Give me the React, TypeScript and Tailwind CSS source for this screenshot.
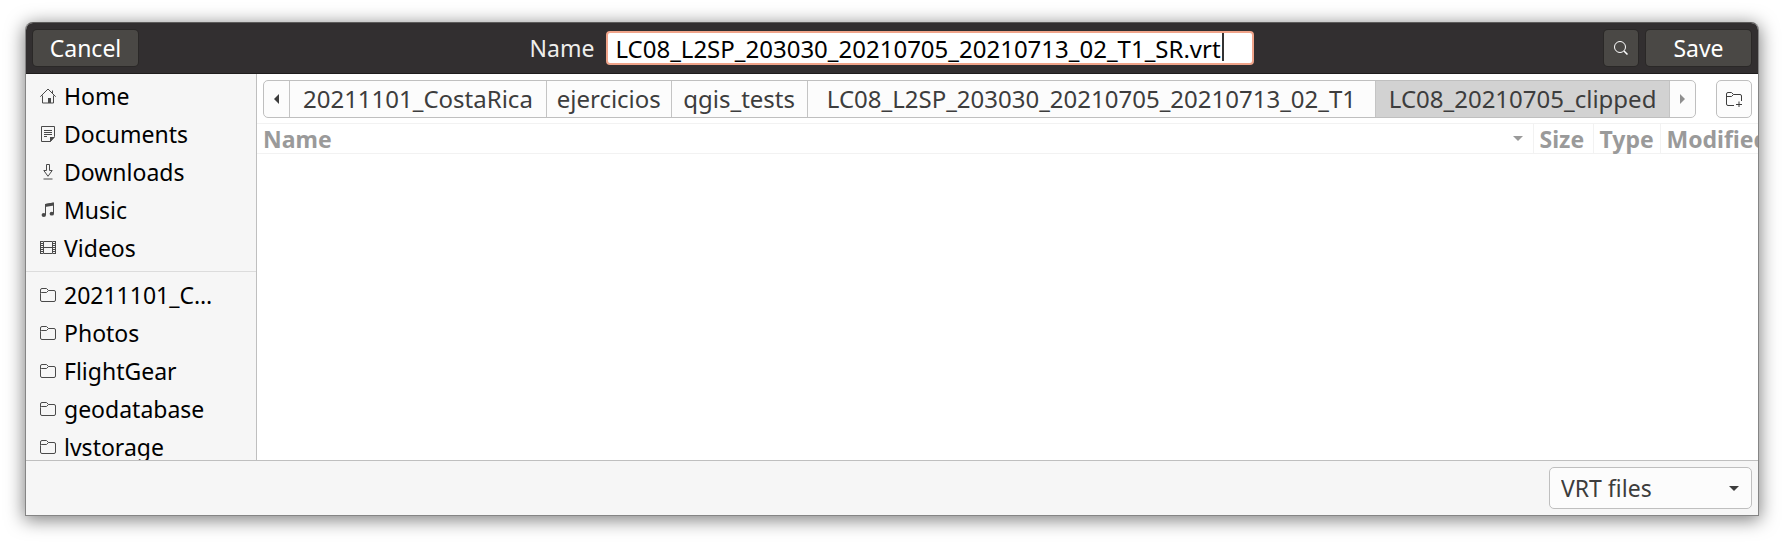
import React from "react";

type IconProps = { className?: string };

const svgProps = {
  width: 16,
  height: 16,
  viewBox: "0 0 16 16",
  fill: "none",
  stroke: "currentColor",
  strokeWidth: 1,
  "aria-hidden": true,
} as const;

const HomeIcon = () => (
  <svg {...svgProps}>
    <path d="M0.3 8.7 8 1l7.7 7.7M2.5 7.5v7.500h11V7.500" />
    <path d="M12.500 2.500v3" />
    <path d="M8 10h3v5H8z" fill="currentColor" stroke="none" />
  </svg>
);
const DocumentIcon = () => (
  <svg {...svgProps}>
    <path d="M1.500.5h13v10l-4 5h-9z" />
    <path d="M4 4.500h8M4 6.500h8M4 8.500h8M4 10.500h3" />
    <path d="M10 16v-5h5z" fill="currentColor" stroke="none" />
  </svg>
);
const DownloadIcon = () => (
  <svg {...svgProps}>
    <path d="M6.500.5h3v6h2.700L8 12.300 3.800 6.500h2.700zM3.500 15h9" />
  </svg>
);
const MusicIcon = () => (
  <svg {...svgProps}>
    <path d="M5.500 13V2.500l8-1.500v10.500" />
    <path d="M5 2l9-1.500v3L5 5z" fill="currentColor" stroke="none" />
    <ellipse cx="3.800" cy="13" rx="2.200" ry="1.900" fill="currentColor" stroke="none" />
    <ellipse cx="11.800" cy="11.700" rx="2.200" ry="1.900" fill="currentColor" stroke="none" />
  </svg>
);
const VideoIcon = () => (
  <svg {...svgProps}>
    <path d="M3.500 1.500h9v12h-9zM3.500 7.500h9" />
    <path d="M2 1v13M14 1v13" strokeWidth="2" strokeDasharray="1 1" />
    <path d="M.5 1v13M15.500 1v13" />
  </svg>
);
const FolderIcon = () => (
  <svg {...svgProps}>
    <path d="M.5 6.500V3A1.500 1.500 0 0 1 2 1.500h4.500L8.500 3.500H14A1.500 1.500 0 0 1 15.500 5v8a1.500 1.500 0 0 1-1.500 1.500H2A1.500 1.500 0 0 1 .5 13zM.5 6A1 1 0 0 1 1.500 5.500h5l2-2" />
  </svg>
);
const NewFolderIcon = () => (
  <svg {...svgProps} width={18} height={16} viewBox="0 0 18 16">
    <path d="M9 14.500H3A1.500 1.500 0 0 1 1.500 13V3A1.500 1.500 0 0 1 3 1.500h3.500L8.500 3.500H15A1.500 1.500 0 0 1 16.500 5v5M1.500 5.500h5l2-2M11 13.500h6M14 10.500v6" />
  </svg>
);
const SearchIcon = () => (
  <svg {...svgProps}>
    <circle cx="7" cy="7" r="5.500" />
    <path d="M11 11l3.500 3.500" strokeWidth="1.500" />
  </svg>
);

function Triangle({ dir, className = "" }: IconProps & { dir: "left" | "right" | "down" }) {
  const d = { left: "M5 0v10L0 5z", right: "M0 0v10l5-5z", down: "M0 0h10L5 5z" }[dir];
  return (
    <svg
      width={dir === "down" ? 10 : 5}
      height={dir === "down" ? 5 : 10}
      className={className}
      fill="currentColor"
      aria-hidden
    >
      <path d={d} />
    </svg>
  );
}

const places = [
  { name: "Home", Icon: HomeIcon },
  { name: "Documents", Icon: DocumentIcon },
  { name: "Downloads", Icon: DownloadIcon },
  { name: "Music", Icon: MusicIcon },
  { name: "Videos", Icon: VideoIcon },
];
const bookmarks = [
  { name: "20211101_C…", Icon: FolderIcon },
  { name: "Photos", Icon: FolderIcon },
  { name: "FlightGear", Icon: FolderIcon },
  { name: "geodatabase", Icon: FolderIcon },
  { name: "lvstorage", Icon: FolderIcon },
];
const crumbs = [
  "20211101_CostaRica",
  "ejercicios",
  "qgis_tests",
  "LC08_L2SP_203030_20210705_20210713_02_T1",
  "LC08_20210705_clipped",
];

function PlaceList({ items }: { items: typeof places }) {
  return (
    <ul>
      {items.map(({ name, Icon }) => (
        <li key={name}>
          <a href="#" className="flex h-[38px] items-center gap-2 pl-3.5 text-black">
            <span className="text-[#4a4a4a]">
              <Icon />
            </span>
            {name}
          </a>
        </li>
      ))}
    </ul>
  );
}

const headerButton =
  "flex h-9 items-center justify-center rounded-[4px] bg-[#4a4845] text-white shadow-[0_0_0_1px_#2a2827]";

export default function App() {
  return (
    <div className="bg-white px-[25px] pt-[22px] pb-7 font-['Noto_Sans',sans-serif] text-[23px] leading-8">
      <main className="overflow-hidden rounded-t-lg border border-[#858585] border-t-[#5d5c5b] bg-[#f6f6f6] shadow-[0_3px_18px_1px_rgba(0,0,0,0.5)]">
        <header className="grid h-[51px] grid-cols-[1fr_auto_1fr] items-center border-b border-[#1f1d1d] bg-[#322f30] px-[7px] text-white">
          <button type="button" className={`${headerButton} w-[105px]`}>
            Cancel
          </button>
          <div className="flex items-center gap-3">
            <label htmlFor="file-name" className="text-[#eeeeec]">
              Name
            </label>
            <div className="relative">
              <input
                id="file-name"
                type="text"
                defaultValue="LC08_L2SP_203030_20210705_20210713_02_T1_SR.vrt"
                className="block h-[34px] w-[648px] rounded-[4px] border-2 border-[#f0a48a] bg-white px-[7px] text-2xl text-black caret-transparent outline-none"
              />
              <span className="absolute top-0.5 left-[616px] h-7 w-0.5 bg-[#333333]" />
            </div>
          </div>
          <div className="flex justify-end gap-2">
            <button type="button" aria-label="Search" className={`${headerButton} w-[34px]`}>
              <SearchIcon />
            </button>
            <button type="button" className={`${headerButton} w-[105px]`}>
              Save
            </button>
          </div>
        </header>

        <div className="flex h-[387px] border-b border-[#bfbfbf]">
          <nav className="w-[231px] shrink-0 overflow-hidden border-r border-[#bfbfbf]">
            <div className="border-b border-[#dcdcdc] pt-[3px] pb-1">
              <PlaceList items={places} />
            </div>
            <div className="pt-1">
              <PlaceList items={bookmarks} />
            </div>
          </nav>
          <section className="min-w-0 flex-1 bg-white">
            <div className="flex items-center gap-5 px-1.5 pt-1.5 pb-[5px]">
              <div className="grid h-[38px] flex-1 grid-cols-[26px_257fr_125fr_136fr_569fr_294fr_25px] divide-x divide-[#c4c4c4] overflow-hidden rounded-[5px] border border-[#bfbfbf] bg-[#fcfcfc] text-2xl text-[#3d3d3d]">
                <button type="button" aria-label="Scroll left" className="flex items-center justify-center">
                  <Triangle dir="left" />
                </button>
                {crumbs.map((c, i) => (
                  <button
                    key={c}
                    type="button"
                    className={
                      i === crumbs.length - 1
                        ? "min-w-0 bg-[#d2d2d2] whitespace-nowrap"
                        : "min-w-0 whitespace-nowrap"
                    }
                  >
                    {c}
                  </button>
                ))}
                <button
                  type="button"
                  aria-label="Scroll right"
                  className="flex items-center justify-center text-[#8f8f8f]"
                >
                  <Triangle dir="right" />
                </button>
              </div>
              <button
                type="button"
                aria-label="New folder"
                className="flex h-[38px] w-9 items-center justify-center rounded-[5px] border border-[#bfbfbf] bg-[#fcfcfc] text-[#3d3d3d]"
              >
                <NewFolderIcon />
              </button>
            </div>
            <table className="w-full table-fixed border-collapse text-left text-[#9a9a9a]">
              <thead>
                <tr className="h-[30px] border-y border-[#f2f2f2] leading-7">
                  <th className="border-r border-[#f2f2f2] p-0 pr-2.5 pl-1.5">
                    <span className="flex items-center justify-between">
                      Name
                      <Triangle dir="down" />
                    </span>
                  </th>
                  <th className="w-[60px] border-r border-[#f2f2f2] p-0 pl-1.5">Size</th>
                  <th className="w-[67px] border-r border-[#f2f2f2] p-0 pl-1.5">Type</th>
                  <th className="w-[98px] overflow-hidden p-0 pl-1.5 whitespace-nowrap">Modified</th>
                </tr>
              </thead>
            </table>
          </section>
        </div>

        <footer className="flex justify-end px-1.5 py-1.5">
          <div className="relative">
            <select
              aria-label="File type"
              className="h-[42px] w-[203px] appearance-none rounded-[5px] border border-[#bfbfbf] bg-[#fcfcfc] pl-[11px] text-[#3d3d3d]"
            >
              <option>VRT files</option>
            </select>
            <Triangle
              dir="down"
              className="pointer-events-none absolute top-[19px] right-[13px] text-[#3d3d3d]"
            />
          </div>
        </footer>
      </main>
    </div>
  );
}
